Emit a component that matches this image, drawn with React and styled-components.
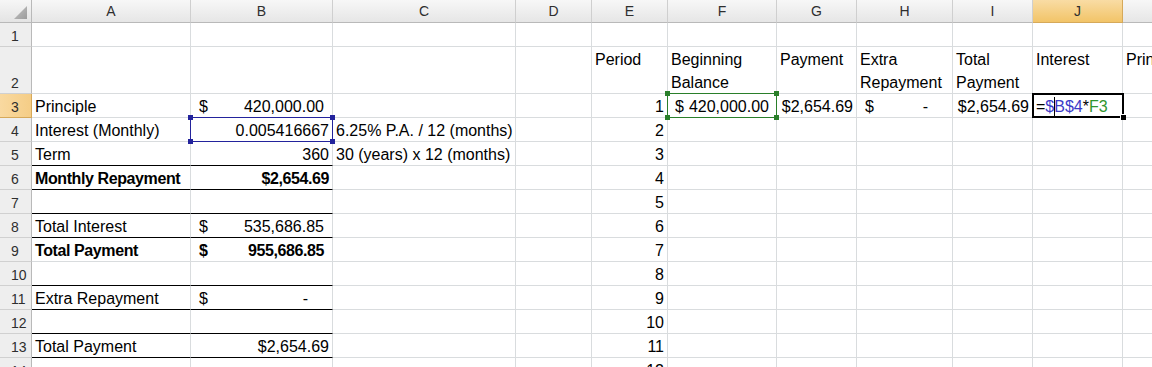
import React from "react";
import styled, { createGlobalStyle } from "styled-components";

const GlobalStyle = createGlobalStyle`
  html, body {
    margin: 0;
    padding: 0;
    background: #fff;
    overflow: hidden;
  }
  body {
    font-family: "Liberation Sans", Arial, sans-serif;
  }
`;

const GRID = "#d9dcde";
const COLS = ["A", "B", "C", "D", "E", "F", "G", "H", "I", "J", "K"];
// K runs past the right edge of the window, like the reference
const WIDTHS = [159, 142, 183, 76, 76, 109, 80, 96, 80, 90, 90];
const ROWS = Array.from({ length: 14 }, (_, i) => i + 1);
const BLACK_RULES = [5, 6, 7, 8, 10, 11, 12, 13];

const data = {
  2: {
    E: { t: "Period" },
    F: { t: "Beginning Balance" },
    G: { t: "Payment" },
    H: { t: "Extra Repayment" },
    I: { t: "Total Payment" },
    J: { t: "Interest" },
    K: { t: "Principal" },
  },
  3: {
    A: { t: "Principle" },
    B: { acct: "420,000.00" },
    E: { n: "1" },
    F: { acct: "420,000.00", narrow: true },
    G: { n: "$2,654.69" },
    H: { acct: "-" },
    I: { n: "$2,654.69" },
    J: { formula: true },
  },
  4: {
    A: { t: "Interest (Monthly)" },
    B: { n: "0.005416667" },
    C: { t: "6.25% P.A. / 12 (months)" },
    E: { n: "2" },
  },
  5: {
    A: { t: "Term" },
    B: { n: "360" },
    C: { t: "30 (years) x 12 (months)" },
    E: { n: "3" },
  },
  6: {
    A: { t: "Monthly Repayment", bold: true },
    B: { n: "$2,654.69", bold: true },
    E: { n: "4" },
  },
  7: { E: { n: "5" } },
  8: { A: { t: "Total Interest" }, B: { acct: "535,686.85" }, E: { n: "6" } },
  9: {
    A: { t: "Total Payment", bold: true },
    B: { acct: "955,686.85", bold: true },
    E: { n: "7" },
  },
  10: { E: { n: "8" } },
  11: { A: { t: "Extra Repayment" }, B: { acct: "-" }, E: { n: "9" } },
  12: { E: { n: "10" } },
  13: { A: { t: "Total Payment" }, B: { n: "$2,654.69" }, E: { n: "11" } },
  14: { E: { n: "12" } },
};

const Sheet = styled.div`
  display: grid;
  width: max-content;
  grid-template-columns: 32px ${WIDTHS.map((w) => w + "px").join(" ")};
  grid-template-rows: 23px ${ROWS.map((r) => (r === 2 ? "47px" : "24px")).join(" ")};
`;

const Corner = styled.div`
  box-sizing: border-box;
  display: flex;
  align-items: flex-end;
  justify-content: flex-end;
  padding: 0 4px 3px 0;
  background: linear-gradient(#f6f6f6, #e4e4e4);
  border-right: 1px solid #b9b9b9;
  border-bottom: 1px solid #b9b9b9;
`;

const ColHeader = styled.div`
  box-sizing: border-box;
  text-align: center;
  font-size: 14px;
  line-height: 22px;
  color: #2e2e2e;
  background: ${(p) =>
    p.$selected
      ? "linear-gradient(#f9dca4, #f2c468)"
      : "linear-gradient(#f7f7f7, #e6e6e6)"};
  border-right: 1px solid ${(p) => (p.$selected ? "#d6a95a" : "#cfcfcf")};
  border-bottom: 1px solid ${(p) => (p.$selected ? "#d6a95a" : "#b9b9b9")};
`;

const RowHeader = styled.div`
  box-sizing: border-box;
  display: flex;
  align-items: flex-end;
  padding-left: 11px;
  font-size: 14px;
  line-height: 20px;
  color: #2e2e2e;
  background: ${(p) =>
    p.$selected ? "linear-gradient(90deg, #f9d9a0, #f5cd86)" : "#eeeeee"};
  border-right: 1px solid ${(p) => (p.$selected ? "#d6a95a" : "#b9b9b9")};
  border-bottom: 1px solid ${(p) => (p.$selected ? "#d6a95a" : "#d0d0d0")};
`;

const Cell = styled.div`
  position: relative;
  box-sizing: border-box;
  display: flex;
  min-width: 0;
  align-items: ${(p) => (p.$top ? "flex-start" : "flex-end")};
  justify-content: ${(p) => (p.$right ? "flex-end" : "flex-start")};
  padding: ${(p) => (p.$top ? "1px 3px 0 3px" : "0 3px 0 3px")};
  border-right: 1px solid ${GRID};
  border-bottom: 1px solid ${(p) => (p.$ruled ? "#000" : GRID)};
  font-size: 16px;
  line-height: ${(p) => (p.$top ? "23px" : "20px")};
  font-weight: ${(p) => (p.$bold ? 700 : 400)};
  letter-spacing: ${(p) => (p.$bold ? "-0.4px" : "normal")};
  color: #000;
  white-space: ${(p) => (p.$top ? "normal" : "nowrap")};
`;

const Acct = styled.span`
  display: flex;
  justify-content: space-between;
  width: 100%;
  box-sizing: border-box;
  padding: 0 ${(p) => (p.$dash ? "21px" : p.$narrow ? "4px" : "5px")} 0
    ${(p) => (p.$narrow ? "4px" : "5px")};
`;

const RangeBox = styled.div`
  position: absolute;
  top: -1px;
  left: -1px;
  right: -1px;
  bottom: -1px;
  border: 1px solid ${(p) => p.$color};
  z-index: 2;
  pointer-events: none;
`;

const Handle = styled.span`
  position: absolute;
  width: 5px;
  height: 5px;
  background: ${(p) => p.$color};
  ${(p) => (p.$bottom ? "bottom: -3px;" : "top: -3px;")}
  ${(p) => (p.$right ? "right: -3px;" : "left: -3px;")}
`;

const ActiveBox = styled.div`
  position: absolute;
  top: -1px;
  left: -1px;
  right: -2px;
  bottom: -1px;
  border: 2px solid #000;
  z-index: 3;
  pointer-events: none;
`;

const FillHandle = styled.span`
  position: absolute;
  right: -4px;
  bottom: -4px;
  width: 5px;
  height: 5px;
  background: #000;
  border-left: 1px solid #fff;
  border-top: 1px solid #fff;
`;

const Ref = styled.span`
  color: ${(p) => p.$color};
`;

const Caret = styled.span`
  display: inline-block;
  width: 1px;
  height: 19px;
  margin-right: -1px;
  background: #000;
  vertical-align: -4px;
`;

const BLUE_BOX = "#23239c";
const GREEN_BOX = "#2a7f2a";

const Range = ({ color }) => (
  <RangeBox $color={color}>
    <Handle $color={color} />
    <Handle $color={color} $right />
    <Handle $color={color} $bottom />
    <Handle $color={color} $bottom $right />
  </RangeBox>
);

const Formula = () => (
  <span>
    =<Ref $color="#3b3bc8">$</Ref>
    <Caret />
    <Ref $color="#3b3bc8">B$4</Ref>*<Ref $color="#2f962f">F3</Ref>
  </span>
);

const renderContent = (spec) => {
  if (!spec) return null;
  if (spec.formula) return <Formula />;
  if (spec.acct)
    return (
      <Acct $dash={spec.acct === "-"} $narrow={spec.narrow}>
        <span>$</span>
        <span>{spec.acct}</span>
      </Acct>
    );
  return spec.t ?? spec.n;
};

const App = () => (
  <>
    <GlobalStyle />
    <Sheet>
      <Corner>
        <svg width="13" height="13" viewBox="0 0 13 13">
          <defs>
            <linearGradient id="tri" x1="0" y1="0" x2="1" y2="1">
              <stop offset="0" stopColor="#c4c4c4" />
              <stop offset="1" stopColor="#9c9c9c" />
            </linearGradient>
          </defs>
          <polygon points="13,0 13,13 0,13" fill="url(#tri)" />
        </svg>
      </Corner>
      {COLS.map((c) => (
        <ColHeader key={c} $selected={c === "J"}>
          {c}
        </ColHeader>
      ))}
      {ROWS.map((r) => (
        <React.Fragment key={r}>
          <RowHeader $selected={r === 3}>{r}</RowHeader>
          {COLS.map((c) => {
            const spec = (data[r] || {})[c];
            const ruled = (c === "A" || c === "B") && BLACK_RULES.includes(r);
            return (
              <Cell
                key={c}
                $top={r === 2}
                $right={!!(spec && spec.n)}
                $bold={spec && spec.bold}
                $ruled={ruled}
              >
                {renderContent(spec)}
                {r === 4 && c === "B" && <Range color={BLUE_BOX} />}
                {r === 3 && c === "F" && <Range color={GREEN_BOX} />}
                {r === 3 && c === "J" && (
                  <ActiveBox>
                    <FillHandle />
                  </ActiveBox>
                )}
              </Cell>
            );
          })}
        </React.Fragment>
      ))}
    </Sheet>
  </>
);

export default App;
